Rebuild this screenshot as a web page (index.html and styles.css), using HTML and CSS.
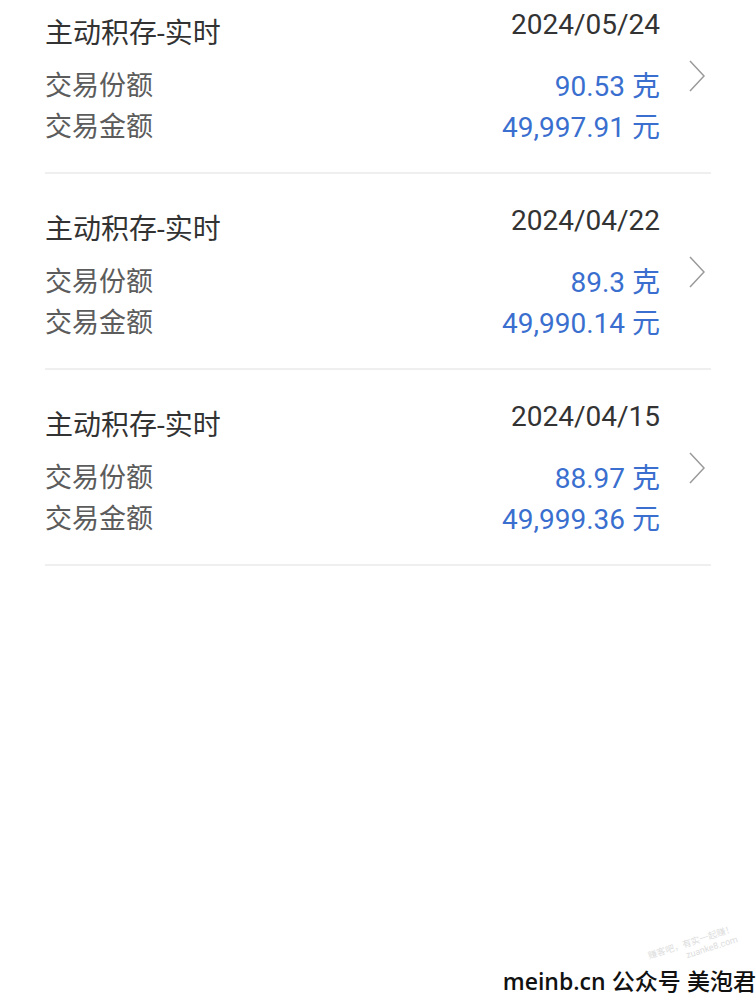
FILE: index.html
```html
<!DOCTYPE html>
<html lang="zh-CN">
<head>
  <meta charset="UTF-8" />
  <meta name="viewport" content="width=device-width, initial-scale=1.0"/>
  <title>交易记录</title>
  <link rel="stylesheet" href="styles.css">
</head>
<body>
  <div class="lista">
    <div class="item">
      <div class="info">
        <div class="topo">
          <span class="titulo">主动积存-实时</span>
          <span class="data">2024/05/24</span>
        </div>
        <div class="linha"><span class="rotulo">交易份额</span><span class="valor">90.53 克</span></div>
        <div class="linha"><span class="rotulo">交易金额</span><span class="valor">49,997.91 元</span></div>
      </div>
      <div class="seta">
        <svg width="16" height="32" viewBox="0 0 16 32"><polyline points="1,1 15,16 1,31" fill="none" stroke="#9a9a9a" stroke-width="1.5"/></svg>
      </div>
    </div>

    <div class="item">
      <div class="info">
        <div class="topo">
          <span class="titulo">主动积存-实时</span>
          <span class="data">2024/04/22</span>
        </div>
        <div class="linha"><span class="rotulo">交易份额</span><span class="valor">89.3 克</span></div>
        <div class="linha"><span class="rotulo">交易金额</span><span class="valor">49,990.14 元</span></div>
      </div>
      <div class="seta">
        <svg width="16" height="32" viewBox="0 0 16 32"><polyline points="1,1 15,16 1,31" fill="none" stroke="#9a9a9a" stroke-width="1.5"/></svg>
      </div>
    </div>

    <div class="item">
      <div class="info">
        <div class="topo">
          <span class="titulo">主动积存-实时</span>
          <span class="data">2024/04/15</span>
        </div>
        <div class="linha"><span class="rotulo">交易份额</span><span class="valor">88.97 克</span></div>
        <div class="linha"><span class="rotulo">交易金额</span><span class="valor">49,999.36 元</span></div>
      </div>
      <div class="seta">
        <svg width="16" height="32" viewBox="0 0 16 32"><polyline points="1,1 15,16 1,31" fill="none" stroke="#9a9a9a" stroke-width="1.5"/></svg>
      </div>
    </div>
  </div>

  <div class="marca-fundo">赚客吧，有实一起赚！<br>zuanke8.com</div>
  <div class="rodape"><span class="site">meinb.cn</span> 公众号 美泡君</div>
</body>
</html>
```

FILE: styles.css
```css
body {
  margin: 0;
  background: #fff;
  font-family: Roboto, "Noto Sans CJK SC", sans-serif;
  height: 1001px;
  overflow: hidden;
  position: relative;
}
.lista {
  margin-top: -22px;
}
.item {
  display: flex;
  margin: 0 45px;
  padding: 27px 0 24px 0;
  border-bottom: 2px solid #efefef;
}
.info {
  flex: 1;
}
.topo {
  display: flex;
  justify-content: space-between;
  align-items: flex-start;
  height: 49px;
  margin-bottom: 12px;
}
.titulo {
  font-size: 28px;
  line-height: 40px;
  margin-top: 9px;
  color: #333;
}
.data {
  font-size: 28px;
  line-height: 40px;
  color: #333;
}
.linha {
  display: flex;
  justify-content: space-between;
  align-items: center;
  height: 41px;
  line-height: 41px;
}
.rotulo {
  font-size: 27px;
  color: #5c5c5c;
}
.valor {
  font-size: 28px;
  color: #3a6fcf;
}
.seta {
  width: 51px;
  display: flex;
  justify-content: flex-end;
  padding-right: 6px;
  box-sizing: border-box;
  padding-top: 55px;
}
.seta svg {
  display: block;
}
.marca-fundo {
  position: absolute;
  right: 18px;
  bottom: 42px;
  font-size: 9px;
  line-height: 11px;
  color: #ddd;
  transform: rotate(-18deg);
  text-align: right;
}
.rodape {
  position: absolute;
  right: 0;
  bottom: 4px;
  font-family: "Noto Sans CJK SC", sans-serif;
  font-size: 23px;
  line-height: 32px;
  font-weight: 500;
  color: #111;
  white-space: nowrap;
  word-spacing: 1px;
}
.rodape .site {
  font-family: "Open Sans", sans-serif;
  font-size: 23px;
  font-weight: 600;
}
```
